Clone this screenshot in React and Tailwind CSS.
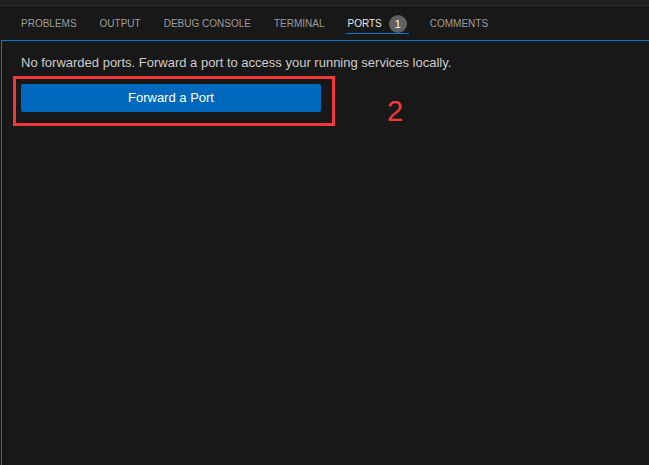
import React from 'react';

const tabs = [
  { label: 'PROBLEMS' },
  { label: 'OUTPUT' },
  { label: 'DEBUG CONSOLE' },
  { label: 'TERMINAL' },
  { label: 'PORTS', badge: 1, active: true },
  { label: 'COMMENTS' },
];

export default function App() {
  return (
    <div className="h-[465px] w-[649px] overflow-hidden bg-[#181818] font-['Liberation_Sans',sans-serif] flex flex-col">
      {/* strip above the panel */}
      <div className="h-[6px] shrink-0 bg-[#1f1f1f] border-b border-[#2b2b2b]" />

      {/* tabs */}
      <div className="h-[34px] shrink-0 flex items-start gap-[19px] pl-[19px]">
        {tabs.map((t) => (
          <div
            key={t.label}
            className={`flex items-center gap-[7px] px-0.5 pt-[9px] border-b ${t.active ? 'border-[#0078d4] text-[#e7e7e7]' : 'border-transparent text-[#9d9d9d]'}`}
          >
            <span className="text-[10px] leading-[18px]">{t.label}</span>
            {t.badge && (
              <span className="w-[18px] h-[18px] rounded-full bg-[#616161] text-white text-[11px] leading-[18px] text-center">
                {t.badge}
              </span>
            )}
          </div>
        ))}
      </div>

      {/* ports view */}
      <div className="relative flex-1 ml-[1px] border-l border-t border-[#0078d4] pl-[19px] pt-[12px]">
        <p className="text-[13px] leading-5 text-[#cccccc]">
          No forwarded ports. Forward a port to access your running services locally.
        </p>
        <button className="mt-[11px] w-[300px] h-[28px] rounded-[2px] bg-[#0068bd] text-white text-[13px]">
          Forward a Port
        </button>

        {/* annotation */}
        <div className="absolute left-[11px] top-[35px] w-[322px] h-[50px] border-[3px] border-[#f03a3a]" />
        <span className="absolute left-[385px] top-[53px] text-[29px] leading-[34px] text-[#f03a3a]">2</span>
      </div>
    </div>
  );
}
